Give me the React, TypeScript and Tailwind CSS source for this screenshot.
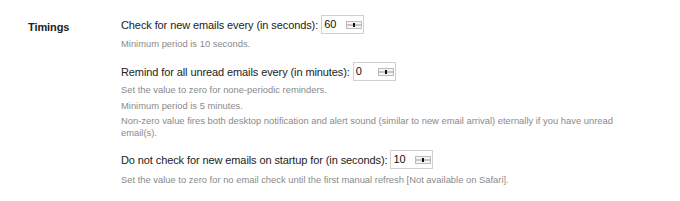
import React from "react";

function Spin() {
  return (
    <svg width="16" height="8" viewBox="0 0 16 8" className="shrink-0">
      <rect x="0.5" y="0.5" width="15" height="7" fill="#f4f4f4" stroke="#bdbdbd" />
      <line x1="1" y1="4" x2="15" y2="4" stroke="#9a9a9a" strokeWidth="1" />
      <rect x="7" y="2" width="2" height="4" fill="#111" />
    </svg>
  );
}

function NumBox({ value }: { value: string }) {
  return (
    <div className="ml-[3px] flex h-[19px] w-[43px] items-center border border-[#d0d0d0] bg-white pl-[2px] pr-[1px]">
      <span className="flex-1 text-[11px] leading-none text-[#111]">{value}</span>
      <Spin />
    </div>
  );
}

function Row({ label, value }: { label: string; value: string }) {
  return (
    <div className="flex items-center">
      <span className="text-[11px] leading-[14px] tracking-[-0.1px] text-[#222]">{label}</span>
      <NumBox value={value} />
    </div>
  );
}

function Hint({ children, className = "" }: { children: React.ReactNode; className?: string }) {
  return <p className={"text-[9.4px] leading-[12px] text-[#8a8a8a] " + className}>{children}</p>;
}

export default function App() {
  return (
    <div
      className="flex h-[201px] w-[680px] bg-white"
      style={{ fontFamily: '"Liberation Sans", Arial, sans-serif' }}
    >
      <div className="w-[121px] shrink-0 pl-[28px] pt-[14px]">
        <span className="text-[11px] font-bold leading-[14px] tracking-[-0.1px] text-[#222]">Timings</span>
      </div>
      <div className="w-[510px] pt-[15px]">
        <Row label="Check for new emails every (in seconds):" value="60" />
        <Hint className="mt-[4px]">Minimum period is 10 seconds.</Hint>
        <div className="mt-[12px]">
          <Row label="Remind for all unread emails every (in minutes):" value="0" />
        </div>
        <div className="mt-[3px] flex flex-col gap-[3.5px]">
          <Hint>Set the value to zero for none-periodic reminders.</Hint>
          <Hint>Minimum period is 5 minutes.</Hint>
          <Hint>
            Non-zero value fires both desktop notification and alert sound (similar to new email arrival) eternally if you have unread email(s).
          </Hint>
        </div>
        <div className="mt-[11px]">
          <Row label="Do not check for new emails on startup for (in seconds):" value="10" />
        </div>
        <Hint className="mt-[5px]">
          Set the value to zero for no email check until the first manual refresh [Not available on Safari].
        </Hint>
      </div>
    </div>
  );
}
